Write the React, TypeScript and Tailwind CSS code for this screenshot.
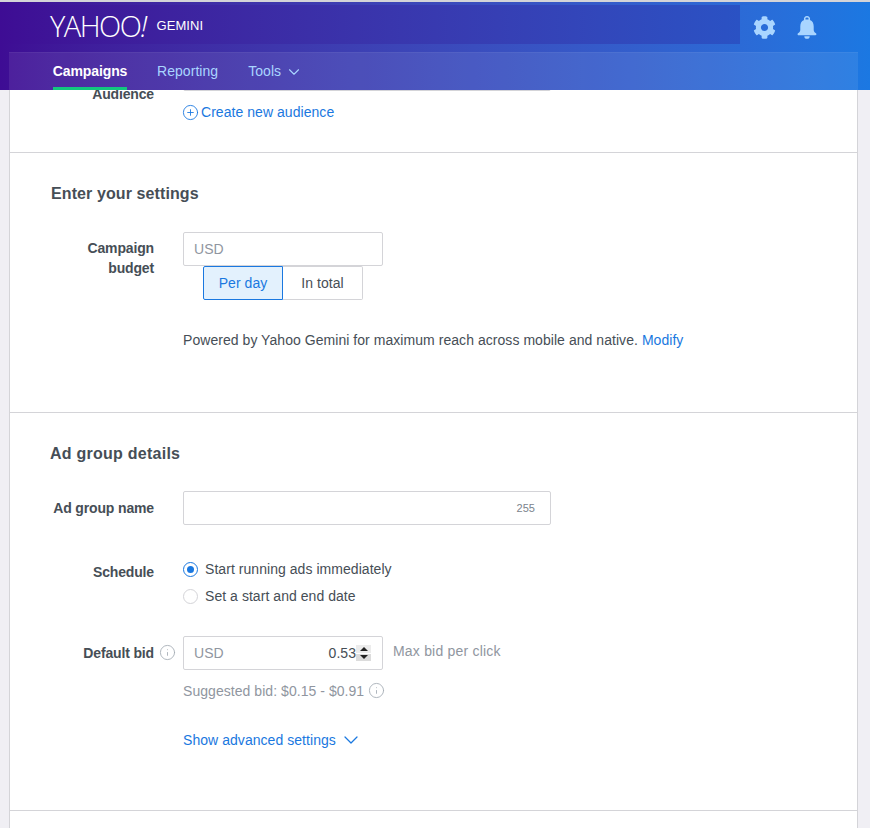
import React from 'react';
import { ChevronDown, Info, PlusCircle } from 'lucide-react';
import { FaCog } from 'react-icons/fa';

function Bell() {
  return (
    <svg viewBox="0 0 20 24" className="w-[20px] h-[23px]" fill="currentColor">
      <path fillRule="evenodd" d="M10 0a3.2 3.2 0 0 1 3.1 4.1C16 5.3 17 7.8 17 11v3.5c0 1.6 1.2 2.6 2.4 3.6.6.5.6 1.9-.6 1.9H1.2C0 20-.1 18.600.6 18.100 1.800 17.100 3 16.100 3 14.500V11c0-3.200 1-5.700 3.900-6.900A3.200 3.200 0 0 1 10 0zm0 1.600a1.600 1.600 0 0 0-1.500 2.100h3A1.600 1.600 0 0 0 10 1.600z" />
      <path d="M7.200 21h5.600a2.800 2.800 0 0 1-5.600 0z" />
    </svg>
  );
}

function Header() {
  return (
    <header className="absolute top-0 left-0 w-full h-[90px] border-t-2 border-[#d4d4d8] bg-gradient-to-r from-[#3e0c94] to-[#1b78e2] z-10">
      <div className="flex h-[50px] pt-[3px] items-start">
        <div className="w-[740px] h-[39px] bg-gradient-to-r from-[#3e0c94] to-[#2a52c4] flex items-center pl-[50px]">
          <span className="text-white text-[29px] font-light tracking-[-1.5px] leading-none pt-[2px] font-['Open_Sans',sans-serif]">
            YAHOO<span className="italic">!</span>
          </span>
          <span className="ml-[11px] mt-[3px] text-white text-[13px] font-medium">GEMINI</span>
        </div>
        <div className="flex items-center text-[#a9d5ff] h-[45px]">
          <FaCog className="ml-[13px] w-[23px] h-[23px]" />
          <div className="ml-[21px]"><Bell /></div>
        </div>
      </div>
      <nav className="ml-[9px] mr-[12px] h-[38px] bg-white/[0.08] border-t border-white/5 flex items-stretch pl-[44px] text-[14px]">
        <a className="relative flex items-center text-white font-bold w-[74px] justify-center tracking-[-0.1px]">
          Campaigns
          <span className="absolute left-0 right-0 bottom-0 h-[3px] bg-[#12c77f]" />
        </a>
        <a className="flex items-center ml-[30px] text-[#a9d5ff]">Reporting</a>
        <a className="flex items-center ml-[30px] text-[#a9d5ff]">
          Tools
          <ChevronDown className="w-[18px] h-[18px] ml-[4px]" strokeWidth={1.5} />
        </a>
      </nav>
    </header>
  );
}

function Label({ children, className = '' }: { children: React.ReactNode; className?: string }) {
  return <div className={`w-[144px] shrink-0 text-right text-[14px] font-bold tracking-[-0.15px] text-[#464e56] ${className}`}>{children}</div>;
}

function InfoDot() {
  return <Info className="w-[17px] h-[17px] text-[#a6adb5]" strokeWidth={1.25} />;
}

export default function App() {
  return (
    <div className="relative h-[828px] overflow-hidden bg-[#f0eff4] font-['Liberation_Sans',Arial,sans-serif] text-[14px] tracking-[0.05px] text-[#464e56]">
      <Header />
      <main className="ml-[9px] w-[849px] h-[828px] bg-white border-x border-[#d4d4d8] pt-[57px]">
        <section className="h-[96px] border-b border-[#d4d4d8]">
          <div className="flex">
            <Label className="pt-[29px] leading-[16px]">Audience</Label>
            <div className="ml-[29px]">
              <div className="w-[368px] h-[34px] border border-[#d4d4d8] rounded-[2px]" />
              <a className="mt-[11px] flex items-center text-[#1a78e0]">
                <PlusCircle className="w-[17px] h-[17px] -ml-[1.5px] mr-[2.5px]" strokeWidth={1.25} />
                Create new audience
              </a>
            </div>
          </div>
        </section>

        <section className="h-[260px] border-b border-[#d4d4d8] pt-[31px]">
          <h2 className="pl-[41px] text-[16px] leading-[20px] font-bold tracking-[0.1px]">Enter your settings</h2>
          <div className="flex mt-[28px]">
            <Label className="pt-[6px] leading-[20px]">Campaign<br />budget</Label>
            <div className="ml-[29px]">
              <div className="w-[200px] h-[34px] border border-[#d4d4d8] rounded-[2px] flex items-center px-[10px] text-[#9096a0]">USD</div>
              <div className="flex ml-[20px]">
                <div className="w-[80px] h-[34px] flex items-center justify-center bg-[#e3f1fd] border border-[#1a78e0] rounded-l-[2px] text-[#1a78e0]">Per day</div>
                <div className="w-[80px] h-[34px] flex items-center justify-center border border-l-0 border-[#d4d4d8] rounded-r-[2px]">In total</div>
              </div>
              <p className="mt-[32px] whitespace-nowrap leading-[16px]">
                Powered by Yahoo Gemini for maximum reach across mobile and native. <a className="text-[#1a78e0]">Modify</a>
              </p>
            </div>
          </div>
        </section>

        <section className="h-[398px] border-b border-[#d4d4d8] pt-[31px]">
          <h2 className="pl-[40px] text-[16px] leading-[20px] font-bold tracking-[0.25px]">Ad group details</h2>
          <div className="flex items-center mt-[27px]">
            <Label>Ad group name</Label>
            <div className="ml-[29px] w-[368px] h-[34px] border border-[#d4d4d8] rounded-[2px] flex items-center justify-end pr-[15px] text-[11px] text-[#7b838c]">255</div>
          </div>
          <div className="flex mt-[28px]">
            <Label className="pt-[11px] leading-[16px]">Schedule</Label>
            <div className="ml-[29px] flex flex-col gap-[11px] pt-[8px]">
              <div className="flex items-center h-[16px]">
                <span className="w-[15px] h-[15px] rounded-full border border-[#1a78e0] flex items-center justify-center">
                  <span className="w-[7px] h-[7px] rounded-full bg-[#1a78e0]" />
                </span>
                <span className="ml-[7px]">Start running ads immediately</span>
              </div>
              <div className="flex items-center h-[16px]">
                <span className="w-[15px] h-[15px] rounded-full border border-[#d4d4d8]" />
                <span className="ml-[7px]">Set a start and end date</span>
              </div>
            </div>
          </div>
          <div className="flex mt-[32px]">
            <Label className="pt-[9px] leading-[16px]">Default bid</Label>
            <div className="pt-[8px] pl-[5px] w-[29px]"><InfoDot /></div>
            <div>
              <div className="flex items-center">
                <div className="w-[200px] h-[34px] border border-[#d4d4d8] rounded-[2px] flex items-center pl-[10px] pr-[11px]">
                  <span className="text-[#9096a0]">USD</span>
                  <span className="ml-auto">0.53</span>
                  <span className="w-[15px] h-[16px] flex flex-col gap-[1px] bg-white">
                    <span className="h-[7.500px] bg-[#ececec] flex items-center justify-center">
                      <span className="w-0 h-0 border-x-[4px] border-x-transparent border-b-[4px] border-b-[#222]" />
                    </span>
                    <span className="h-[7.500px] bg-[#dcdcdc] flex items-center justify-center">
                      <span className="w-0 h-0 border-x-[4px] border-x-transparent border-t-[4px] border-t-[#222]" />
                    </span>
                  </span>
                </div>
                <span className="ml-[10px] text-[#9096a0] -mt-[4px] tracking-[0.2px]">Max bid per click</span>
              </div>
              <div className="mt-[12px] flex items-center text-[#9096a0] leading-[16px]">
                Suggested bid: $0.15 - $0.91
                <span className="ml-[4px]"><InfoDot /></span>
              </div>
              <a className="mt-[33px] flex items-center text-[#1a78e0] leading-[16px]">
                Show advanced settings
                <ChevronDown className="ml-[3px] w-[24px] h-[24px] -my-[4px]" strokeWidth={1.25} />
              </a>
            </div>
          </div>
        </section>
      </main>
    </div>
  );
}
